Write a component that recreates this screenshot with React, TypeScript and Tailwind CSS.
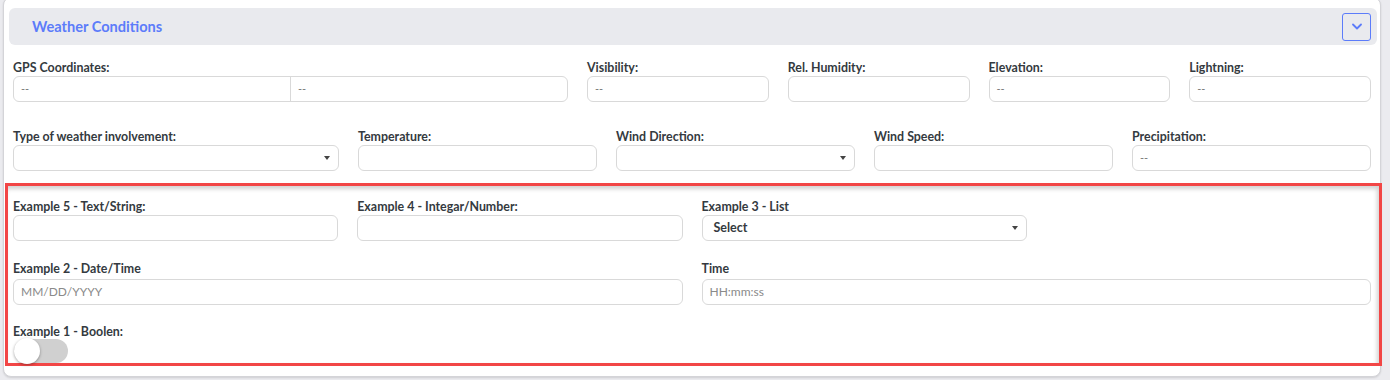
import React from "react";

const font = { fontFamily: "Lato, 'Open Sans', sans-serif" };

const Label = ({ text, className = "" }: { text: string; className?: string }) => (
  <div className={`h-[14px] leading-[14px] text-[12.4px] font-bold text-[#343a40] whitespace-nowrap ${className}`}>
    {text}
  </div>
);

const Box = ({ value, placeholder }: { value?: string; placeholder?: string }) => (
  <div className="h-[26px] rounded-[6px] border border-[#d9d9d9] bg-white flex items-center px-[7px] text-[11px]">
    {value && <span className="text-[#777]">{value}</span>}
    {placeholder && <span className="text-[#8a8a8a] text-[12px]">{placeholder}</span>}
  </div>
);

const Caret = () => (
  <span className="w-0 h-0 border-x-[3px] border-x-transparent border-t-[4px] border-t-[#444]" />
);

const SelectBox = ({ value }: { value?: string }) => (
  <div className="h-[26px] rounded-[6px] border border-[#d9d9d9] bg-white flex items-center justify-between pl-[11px] pr-[8px]">
    <span className="font-bold text-[12.5px] text-[#343a40]">{value}</span>
    <Caret />
  </div>
);

const Field = ({ label, children }: { label: string; children: React.ReactNode }) => (
  <div>
    <Label text={label} className="mb-[1px]" />
    {children}
  </div>
);

export default function App() {
  return (
    <div className="h-[380px] w-full bg-[#ebebef] pl-[3px] pr-[9px] overflow-hidden" style={font}>
      <div className="mt-[-3px] bg-white border border-[#d4d4d8] rounded-lg px-[9px] pt-[10px] pb-[10px] shadow-[0_1px_2px_rgba(0,0,0,0.12)]">
        {/* header */}
        <div className="ml-[-4px] mr-[-6px] h-[37px] rounded-[6px] bg-[#e9eaee] flex items-center justify-between pl-[23px] pr-[6px]">
          <span className="text-[14.6px] font-bold text-[#5c7cfa]">Weather Conditions</span>
          <button className="w-[29px] h-[28px] rounded-[3px] border border-[#5c7cfa] flex items-center justify-center">
            <svg width="10" height="7" viewBox="0 0 10 7" fill="none">
              <path d="M1 1.5 L5 5.5 L9 1.5" stroke="#5c7cfa" strokeWidth="1.8" strokeLinecap="round" strokeLinejoin="round" />
            </svg>
          </button>
        </div>

        {/* row 1 */}
        <div className="mt-[16px] grid grid-cols-[555px_repeat(4,1fr)] gap-x-[19px]">
          <Field label="GPS Coordinates:">
            <div className="h-[26px] rounded-[6px] border border-[#d9d9d9] flex text-[11px] text-[#777]">
              <div className="flex-1 flex items-center px-[7px]">--</div>
              <div className="flex-1 flex items-center px-[7px] border-l border-[#d9d9d9]">--</div>
            </div>
          </Field>
          <Field label="Visibility:"><Box value="--" /></Field>
          <Field label="Rel. Humidity:"><Box /></Field>
          <Field label="Elevation:"><Box value="--" /></Field>
          <Field label="Lightning:"><Box value="--" /></Field>
        </div>

        {/* row 2 */}
        <div className="mt-[28px] grid grid-cols-[326px_repeat(4,1fr)] gap-x-[19px]">
          <Field label="Type of weather involvement:"><SelectBox /></Field>
          <Field label="Temperature:"><Box /></Field>
          <Field label="Wind Direction:"><SelectBox /></Field>
          <Field label="Wind Speed:"><Box /></Field>
          <Field label="Precipitation:"><Box value="--" /></Field>
        </div>

        {/* custom fields */}
        <div className="mt-[12px] ml-[-8px] mr-[-11px] border-[3px] border-[#f24646] shadow-[inset_-2px_3px_4px_rgba(0,0,0,0.18)] pl-[5px] pr-[8px] pt-[14px]">
          <div className="grid grid-cols-4 gap-x-[19px]">
            <Field label="Example 5 - Text/String:"><Box /></Field>
            <Field label="Example 4 - Integar/Number:"><Box /></Field>
            <Field label="Example 3 - List"><SelectBox value="Select" /></Field>
          </div>
          <div className="mt-[21px] grid grid-cols-2 gap-x-[19px]">
            <div>
              <Label text="Example 2 - Date/Time" className="mb-[3px]" />
              <Box placeholder="MM/DD/YYYY" />
            </div>
            <div>
              <Label text="Time" className="mb-[3px]" />
              <Box placeholder="HH:mm:ss" />
            </div>
          </div>
          <div className="mt-[20px]">
            <Label text="Example 1 - Boolen:" />
            <div className="ml-[1px] w-[54px] h-[24px] rounded-full bg-[#d0d0d0] flex items-center">
              <span className="w-[26px] h-[26px] rounded-full bg-white shadow-[0_1px_3px_rgba(0,0,0,0.35)]" />
            </div>
          </div>
        </div>
      </div>
    </div>
  );
}
